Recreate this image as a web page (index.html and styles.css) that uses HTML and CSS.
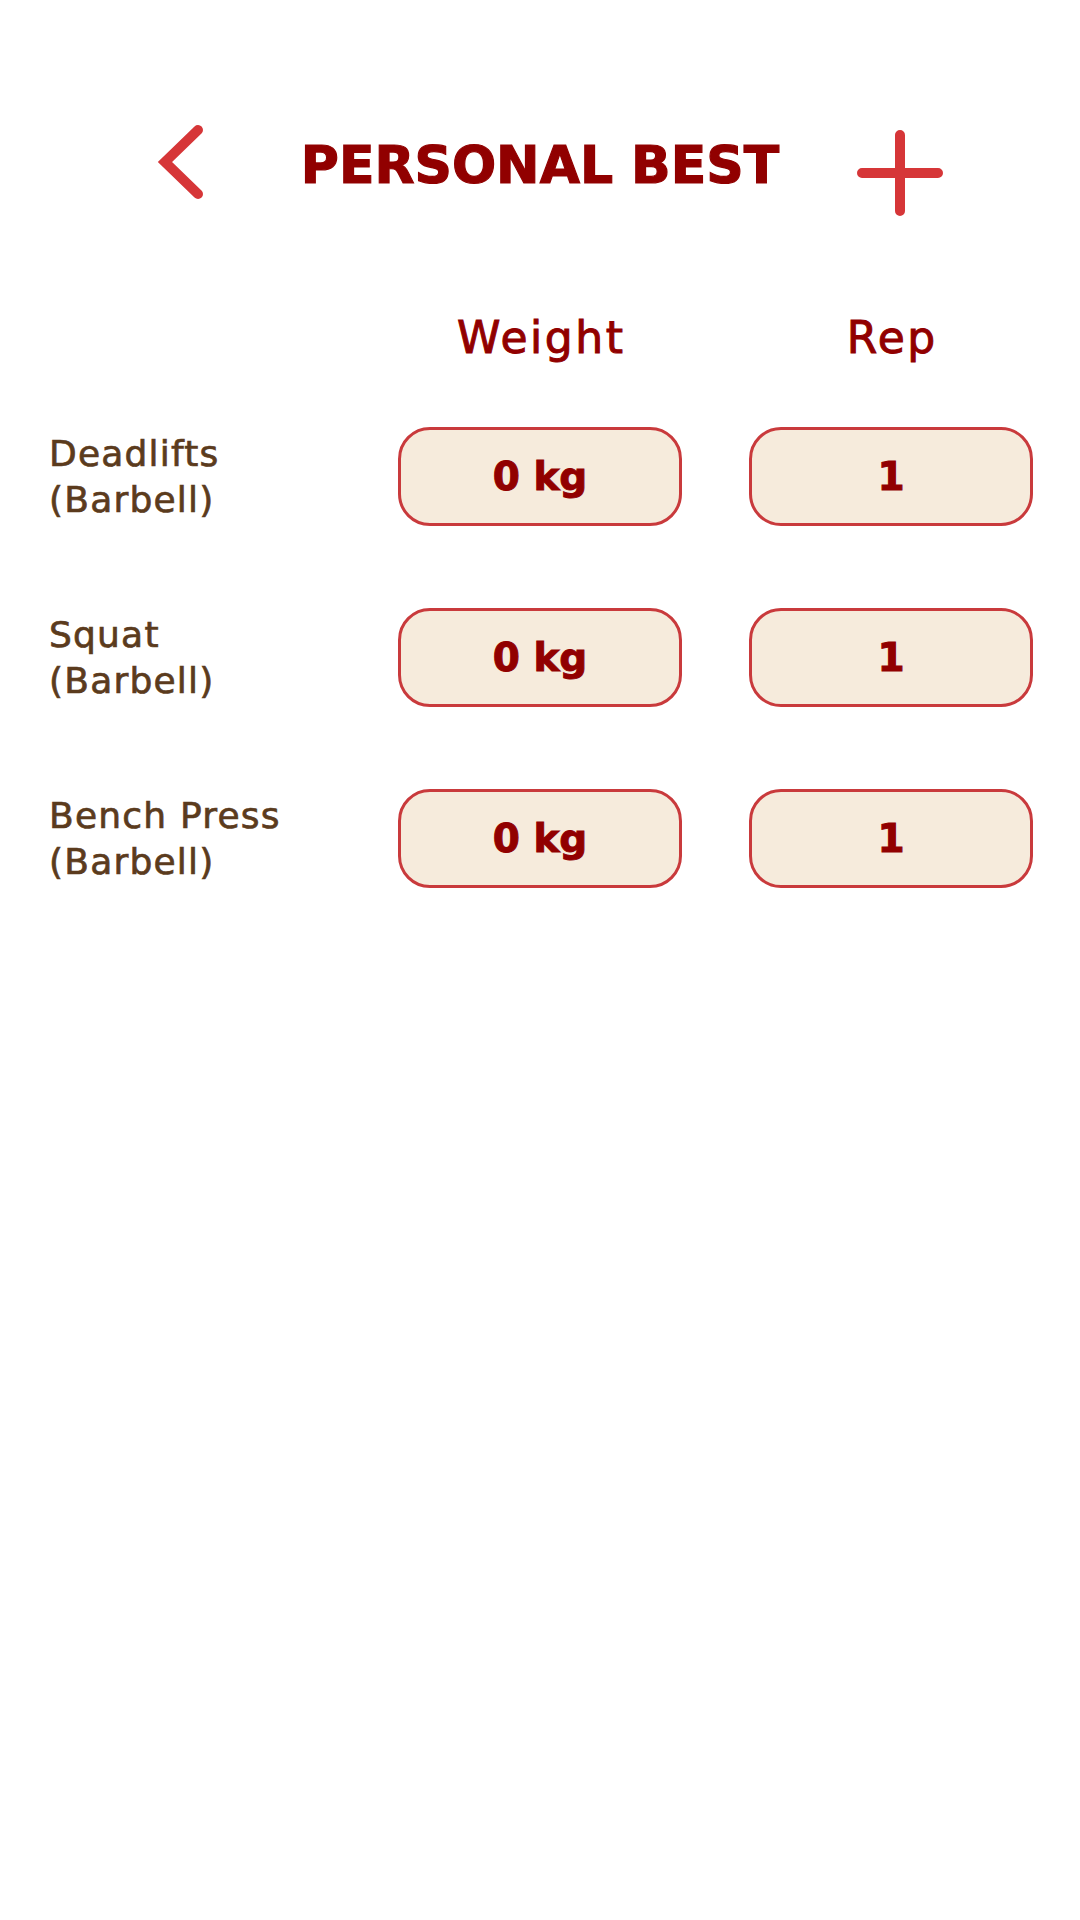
FILE: index.html
```html
<!DOCTYPE html>
<html lang="en">
<head>
<meta charset="utf-8">
<title>Personal Best</title>
<link rel="stylesheet" href="styles.css">
</head>
<body>
<div class="screen">
  <header class="topbar">
    <div class="back">
      <svg class="chev" width="50" height="80" viewBox="0 0 50 80">
        <path d="M42 8 L9 40 L42 72" fill="none" stroke="#d63638" stroke-width="10" stroke-linecap="round" stroke-linejoin="miter"/>
      </svg>
    </div>
    <h1 class="title">PERSONAL BEST</h1>
    <div class="add">
      <svg class="plus" width="86" height="86" viewBox="0 0 86 86">
        <path d="M43 5 V81 M5 43 H81" fill="none" stroke="#d63638" stroke-width="10" stroke-linecap="round"/>
      </svg>
    </div>
  </header>

  <section class="table">
    <div class="colhead"></div>
    <div class="colhead">Weight</div>
    <div class="colhead">Rep</div>

    <div class="label">Deadlifts<br>(Barbell)</div>
    <div class="cell">0 kg</div>
    <div class="cell">1</div>

    <div class="label">Squat<br>(Barbell)</div>
    <div class="cell">0 kg</div>
    <div class="cell">1</div>

    <div class="label">Bench Press<br>(Barbell)</div>
    <div class="cell">0 kg</div>
    <div class="cell">1</div>
  </section>
</div>
</body>
</html>
```

FILE: styles.css
```css
html, body {
  margin: 0;
  padding: 0;
  background: #ffffff;
}

body {
  font-family: "DejaVu Sans", "Liberation Sans", sans-serif;
  width: 1080px;
  height: 1920px;
  overflow: hidden;
}

.screen {
  display: flex;
  flex-direction: column;
}

.topbar {
  display: grid;
  grid-template-columns: 1fr auto 1fr;
  align-items: start;
  padding-top: 122px;
}

.back {
  justify-self: start;
  padding-left: 156px;
}

.chev, .plus {
  display: block;
}

.add {
  justify-self: end;
  padding-right: 137px;
  padding-top: 8px;
}

.title {
  margin: 0;
  margin-top: 12px;
  font-size: 52px;
  line-height: 62px;
  font-weight: bold;
  color: #910000;
  -webkit-text-stroke: 1.2px #910000;
}

.table {
  display: grid;
  grid-template-columns: 1fr 284px 284px;
  column-gap: 67px;
  row-gap: 82px;
  padding: 0 47px 0 49px;
  margin-top: 97px;
  align-items: center;
}

.colhead {
  font-size: 44px;
  line-height: 50px;
  color: #910000;
  text-align: center;
  margin-bottom: -18px;
  letter-spacing: 2.5px;
  text-indent: 2.5px;
  -webkit-text-stroke: 1px #910000;
}

.label {
  font-size: 36px;
  line-height: 46px;
  color: #5b3b1d;
  letter-spacing: 1.2px;
  -webkit-text-stroke: 0.7px #5b3b1d;
}

.cell {
  box-sizing: border-box;
  height: 99px;
  border: 3px solid #c93a3c;
  border-radius: 32px;
  background: #f6ebdc;
  display: flex;
  align-items: center;
  justify-content: center;
  font-size: 39px;
  font-weight: bold;
  color: #910000;
  -webkit-text-stroke: 1px #910000;
}
```
